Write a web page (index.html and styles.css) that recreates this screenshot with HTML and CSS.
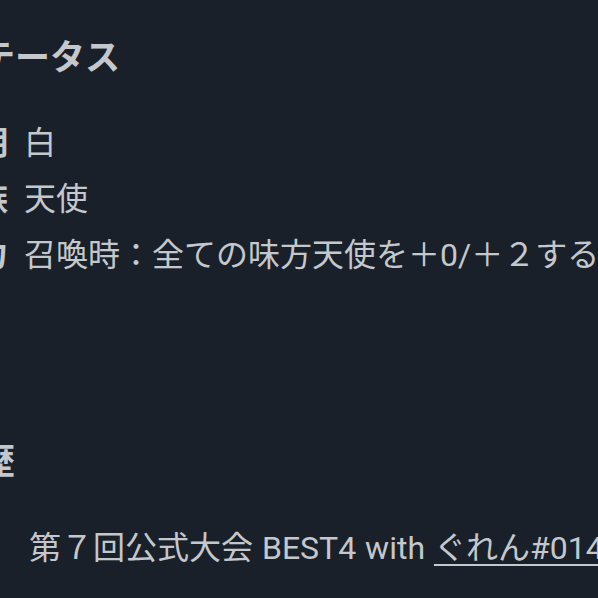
FILE: index.html
```html
<!DOCTYPE html>
<html lang="ja">
<head>
<meta charset="utf-8">
<title>ステータス</title>
<link rel="stylesheet" href="styles.css">
</head>
<body>
<main class="page">
  <section class="status">
    <h2 class="heading">ステータス</h2>
    <dl class="stats">
      <dt class="label">文明</dt><dd class="value">白</dd>
      <dt class="label">種族</dt><dd class="value">天使</dd>
      <dt class="label">能力</dt><dd class="value">召喚時：全ての味方天使を＋0/＋２する</dd>
    </dl>
  </section>
  <section class="history">
    <h2 class="heading">戦歴</h2>
    <ul class="records">
      <li class="record">第７回公式大会 BEST4 with <a class="link" href="#">ぐれん#0142</a></li>
    </ul>
  </section>
</main>
</body>
</html>
```

FILE: styles.css
```css
html, body {
  margin: 0;
  padding: 0;
  background: #19202a;
  overflow: hidden;
  height: 100%;
}
body {
  font-family: Roboto, "Noto Sans CJK JP", sans-serif;
  color: #c4c8cd;
}
.page {
  margin-left: -57px;
  white-space: nowrap;
  width: 1000px;
}
.heading {
  margin: 0 0 0 2px;
  font-size: 35px;
  line-height: 44px;
  font-weight: 700;
}
.status {
  padding-top: 37px;
}
.stats {
  display: grid;
  grid-template-columns: 64px auto;
  column-gap: 16px;
  margin: 34px 0 0 1px;
  font-size: 32px;
  line-height: 56px;
}
.label {
  font-weight: 700;
  margin: 0;
}
.value {
  margin: 0;
}
.history {
  margin-top: 158px;
}
.records {
  list-style: none;
  margin: 35px 0 0;
  padding-left: 86px;
  font-size: 32px;
  line-height: 56px;
  word-spacing: 1px;
}
.link {
  color: inherit;
  text-decoration: underline;
  text-decoration-thickness: 1.5px;
  text-underline-offset: 5px;
}
```
